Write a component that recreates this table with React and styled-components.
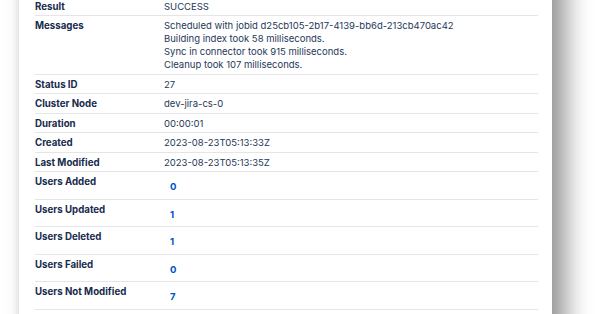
import React from "react";
import styled, { createGlobalStyle } from "styled-components";

const rows = [
  { label: "Result", value: ["SUCCESS"] },
  {
    label: "Messages",
    value: [
      "Scheduled with jobid d25cb105-2b17-4139-bb6d-213cb470ac42",
      "Building index took 58 milliseconds.",
      "Sync in connector took 915 milliseconds.",
      "Cleanup took 107 milliseconds.",
    ],
  },
  { label: "Status ID", value: ["27"] },
  { label: "Cluster Node", value: ["dev-jira-cs-0"] },
  { label: "Duration", value: ["00:00:01"] },
  { label: "Created", value: ["2023-08-23T05:13:33Z"] },
  { label: "Last Modified", value: ["2023-08-23T05:13:35Z"] },
  { label: "Users Added", count: 0 },
  { label: "Users Updated", count: 1 },
  { label: "Users Deleted", count: 1 },
  { label: "Users Failed", count: 0 },
  { label: "Users Not Modified", count: 7 },
];

const Global = createGlobalStyle`
  html, body {
    margin: 0;
    background: #ffffff;
    overflow: hidden;
  }
  body {
    font-family: Inter, "Noto Sans", sans-serif;
    -webkit-font-smoothing: antialiased;
  }
`;

const Page = styled.div`
  width: 600px;
  height: 314px;
  overflow: hidden;
  padding-left: 19px;
  box-sizing: border-box;
`;

const Panel = styled.div`
  width: 533px;
  margin-top: -40px;
  padding: 36.5px 14px 60px 16px;
  box-sizing: border-box;
  background: #ffffff;
  box-shadow: 14px 0 24px rgba(0, 0, 0, 0.42), -3px 0 6px rgba(0, 0, 0, 0.06);
`;

const Table = styled.div`
  display: grid;
  grid-template-columns: 129px 1fr;
`;

const Label = styled.div`
  padding: 3px 0 2.5px;
  border-bottom: 1px solid #e4e5e8;
  font-size: 9.7px;
  line-height: 13px;
  font-weight: 700;
  color: #172b4d;
`;

const Value = styled.div`
  padding: 3px 0 2.5px;
  border-bottom: 1px solid #e4e5e8;
  font-size: 9.5px;
  line-height: 13px;
  color: #253858;
`;

const Count = styled.div`
  padding: 5px 0 3px 6px;
  font-weight: 700;
  color: #0052cc;
`;

export default function App() {
  return (
    <>
      <Global />
      <Page>
        <Panel>
          <Table>
            {rows.map((r) => (
              <React.Fragment key={r.label}>
                <Label>{r.label}</Label>
                <Value>
                  {r.value
                    ? r.value.map((line) => <div key={line}>{line}</div>)
                    : <Count>{r.count}</Count>}
                </Value>
              </React.Fragment>
            ))}
          </Table>
        </Panel>
      </Page>
    </>
  );
}
